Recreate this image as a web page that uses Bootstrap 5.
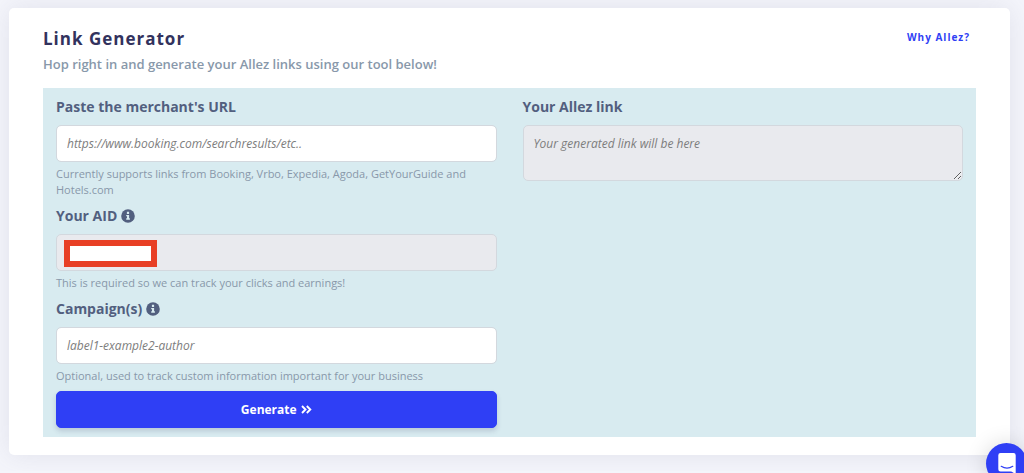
<!DOCTYPE html>
<html lang="en">
<head>
<meta charset="utf-8">
<meta name="viewport" content="width=device-width, initial-scale=1">
<title>Link Generator</title>
<link rel="stylesheet" href="https://cdn.jsdelivr.net/npm/bootstrap@5.3.0/dist/css/bootstrap.min.css">
<style>
  body { background: #f4f5fb; font-family: "Open Sans", sans-serif; color: #525f7f; }
  .page { padding: 8px 14px 16px 9px; }
  .tool-card { border: 0; border-radius: 5px; padding: 18px 34px; box-shadow: 0 0 26px rgba(100, 100, 130, .13); }
  .tool-title { font-size: 17px; line-height: 26px; letter-spacing: 1px; font-weight: 700; color: #32325d; margin: 0 0 2px; }
  .tool-lead { font-size: 13px; line-height: 20px; font-weight: 600; color: #8898aa; margin: 0 0 14px; }
  .why-link { font-size: 10px; line-height: 22px; letter-spacing: 1px; font-weight: 700; color: #2f3ff5; text-decoration: none; margin-right: 6px; }
  .tool-panel { background: #d8ebf0; padding: 8px 0 9px; }
  .tool-panel .row { --bs-gutter-x: 26px; }
  .field-label { display: flex; align-items: center; gap: 4px; font-size: 14px; line-height: 22px; font-weight: 700; margin-bottom: 7px; }
  .field-label svg { width: 14px; height: 14px; }
  .tool-input { font-size: 12px; line-height: 17px; padding: 9px 10px; border: 1px solid #d3d8de; border-radius: 5px; min-height: 37px; }
  .tool-input::placeholder { color: #7d7d7d; font-style: italic; }
  .tool-input:disabled, .tool-input[readonly] { background: #e9eaee; }
  textarea.tool-input { height: 56px; resize: vertical; }
  .help { font-size: 11px; line-height: 16px; color: #8898aa; margin: 4px 0 7px; }
  .redaction { top: 6px; left: 8px; width: 93px; height: 27px; background: #fff; border: 6px solid #e83f25; }
  .generate { background: #2f3ff5; color: #fff; font-size: 12px; line-height: 17px; font-weight: 700; padding: 9px; border: 1px solid #2f3ff5; border-radius: 5px; box-shadow: 0 3px 5px rgba(50, 50, 93, .18); }
  .generate svg { width: 11px; height: 9px; }
  .chat { right: -3px; bottom: -11px; width: 41px; height: 41px; background: #2f3ff5; border: 0; box-shadow: 0 1px 22px rgba(0, 0, 0, .16); }
  .chat svg { width: 18px; height: 21px; }
</style>
</head>
<body>
<main class="page">
  <section class="card tool-card">
    <header class="d-flex justify-content-between align-items-start">
      <div>
        <h1 class="tool-title">Link Generator</h1>
        <p class="tool-lead">Hop right in and generate your Allez links using our tool below!</p>
      </div>
      <a class="why-link" href="#">Why Allez?</a>
    </header>
    <form class="tool-panel">
      <div class="row mx-0">
        <div class="col-6">
          <label class="field-label" for="url">Paste the merchant's URL</label>
          <input class="form-control tool-input" id="url" type="text" placeholder="https://www.booking.com/searchresults/etc..">
          <p class="help">Currently supports links from Booking, Vrbo, Expedia, Agoda, GetYourGuide and Hotels.com</p>

          <label class="field-label" for="aid">Your AID
            <svg viewBox="0 0 14 14" aria-hidden="true"><circle cx="7" cy="7" r="6.8" fill="#525f7f"/><path fill="#d8ebf0" d="M5.9 2.8h2.2V5H5.9zM5.2 5.9h2.9v3.4h.8v1.4H5.2V9.3H6v-2h-.8z"/></svg>
          </label>
          <div class="position-relative">
            <input class="form-control tool-input" id="aid" type="text" disabled>
            <span class="redaction position-absolute"></span>
          </div>
          <p class="help">This is required so we can track your clicks and earnings!</p>

          <label class="field-label" for="campaign">Campaign(s)
            <svg viewBox="0 0 14 14" aria-hidden="true"><circle cx="7" cy="7" r="6.8" fill="#525f7f"/><path fill="#d8ebf0" d="M5.9 2.8h2.2V5H5.9zM5.2 5.9h2.9v3.4h.8v1.4H5.2V9.3H6v-2h-.8z"/></svg>
          </label>
          <input class="form-control tool-input" id="campaign" type="text" placeholder="label1-example2-author">
          <p class="help">Optional, used to track custom information important for your business</p>

          <button class="btn generate w-100 d-flex justify-content-center align-items-center gap-1" type="button">Generate
            <svg viewBox="0 0 11 9" fill="none" stroke="#fff" stroke-width="1.9" aria-hidden="true"><path d="M1 1l3.500 3.500L1 8M5.800 1l3.500 3.500L5.800 8"/></svg>
          </button>
        </div>
        <div class="col-6">
          <label class="field-label" for="result">Your Allez link</label>
          <textarea class="form-control tool-input" id="result" readonly placeholder="Your generated link will be here"></textarea>
        </div>
      </div>
    </form>
  </section>
</main>
<button class="chat position-fixed rounded-circle p-0 d-flex justify-content-center align-items-center" type="button" aria-label="Open chat">
  <svg viewBox="0 0 18 21" aria-hidden="true"><path fill="#fff" d="M2.500 0h13A2.200 2.200 0 0 1 17.700 2.200V21l-4.500-2.600H2.500A2.200 2.200 0 0 1 .3 16.200v-14A2.200 2.200 0 0 1 2.500 0z"/><path d="M3.200 13.300q5.800 3.800 11.600 0" fill="none" stroke="#2f3ff5" stroke-width="1.200" stroke-linecap="round"/></svg>
</button>
<script src="https://cdn.jsdelivr.net/npm/bootstrap@5.3.0/dist/js/bootstrap.bundle.min.js"></script>
</body>
</html>
